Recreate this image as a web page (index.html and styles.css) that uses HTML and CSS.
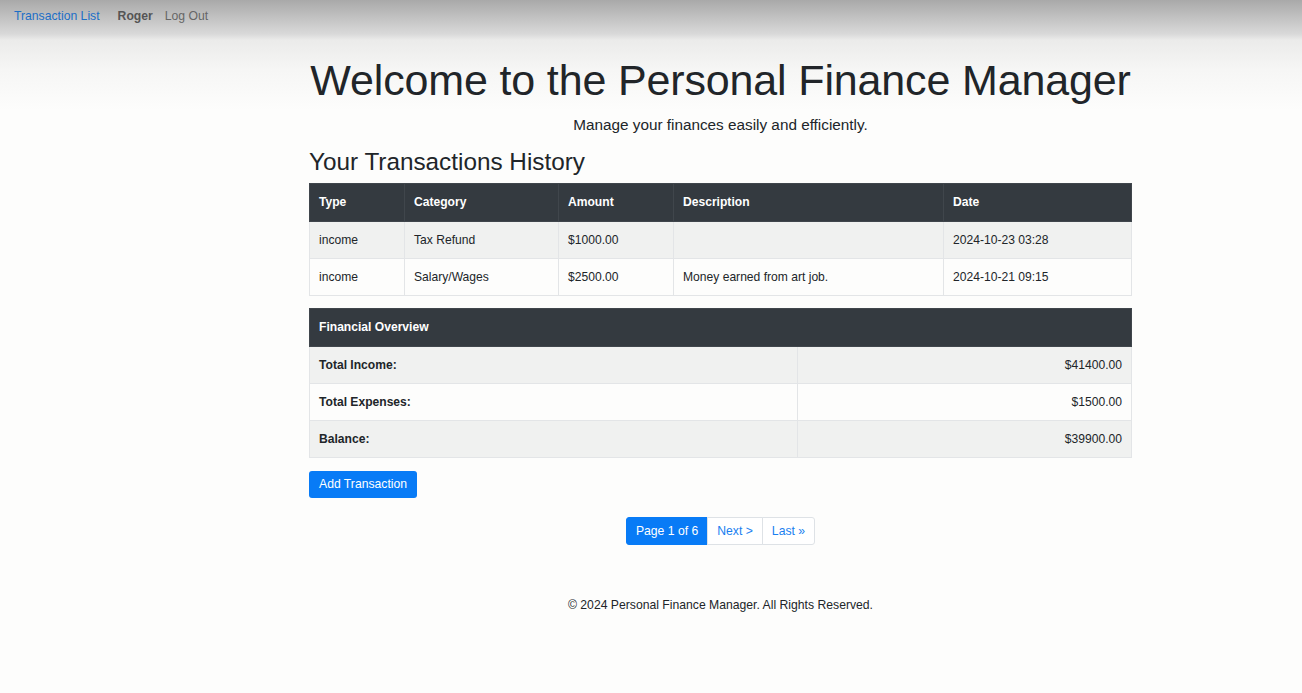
FILE: index.html
```html
<!DOCTYPE html>
<html lang="en">
<head>
<meta charset="utf-8">
<title>Personal Finance Manager</title>
<link rel="stylesheet" href="styles.css">
</head>
<body>
<nav class="topnav">
  <a class="nav-link brand" href="#">Transaction List</a>
  <span class="nav-user">Roger</span>
  <a class="nav-link logout" href="#">Log Out</a>
</nav>
<main class="main">
  <h1 class="title">Welcome to the Personal Finance Manager</h1>
  <p class="lead">Manage your finances easily and efficiently.</p>
  <h2 class="section-title">Your Transactions History</h2>
  <table class="table tx-table">
    <thead>
      <tr>
        <th class="c-type">Type</th>
        <th class="c-cat">Category</th>
        <th class="c-amt">Amount</th>
        <th class="c-desc">Description</th>
        <th class="c-date">Date</th>
      </tr>
    </thead>
    <tbody>
      <tr class="odd">
        <td>income</td>
        <td>Tax Refund</td>
        <td>$1000.00</td>
        <td></td>
        <td>2024-10-23 03:28</td>
      </tr>
      <tr>
        <td>income</td>
        <td>Salary/Wages</td>
        <td>$2500.00</td>
        <td>Money earned from art job.</td>
        <td>2024-10-21 09:15</td>
      </tr>
    </tbody>
  </table>
  <table class="table overview">
    <thead>
      <tr><th colspan="2">Financial Overview</th></tr>
    </thead>
    <tbody>
      <tr class="odd"><td class="label">Total Income:</td><td class="value">$41400.00</td></tr>
      <tr><td class="label">Total Expenses:</td><td class="value">$1500.00</td></tr>
      <tr class="odd"><td class="label">Balance:</td><td class="value">$39900.00</td></tr>
    </tbody>
  </table>
  <div class="actions">
    <a class="btn-primary" href="#">Add Transaction</a>
  </div>
  <div class="pager-wrap">
    <ul class="pager">
      <li class="page active">Page 1 of 6</li>
      <li class="page"><a href="#">Next &gt;</a></li>
      <li class="page"><a href="#">Last &raquo;</a></li>
    </ul>
  </div>
  <footer class="footer">&copy; 2024 Personal Finance Manager. All Rights Reserved.</footer>
</main>
</body>
</html>
```

FILE: styles.css
```css
* { box-sizing: border-box; }
html, body { height: 100%; }
body {
  margin: 0;
  font-family: "Liberation Sans", Arial, sans-serif;
  color: #212529;
  background: linear-gradient(to bottom, #a9a9a9 0px, #d9d9d9 34px, #ebebea 40px, #f6f6f5 70px, #fdfdfc 110px) no-repeat, #fdfdfc;
}
.topnav {
  height: 38px;
  display: flex;
  align-items: center;
  padding: 0 14px 6px;
  font-size: 12.2px;
  line-height: 16px;
}
.nav-link { text-decoration: none; }
.brand { color: #1c6ec6; margin-right: 18px; }
.nav-user { color: #555; font-weight: bold; margin-right: 12px; }
.logout { color: #666; }

.main {
  width: 823px;
  margin-left: 309px;
}
.title {
  margin: 14px 0 0;
  font-size: 43px;
  font-weight: 400;
  line-height: 56px;
  text-align: center;
  letter-spacing: -0.15px;
  white-space: nowrap;
}
.lead {
  margin: 6px 0 0;
  font-size: 15.3px;
  line-height: 22px;
  text-align: center;
}
.section-title {
  margin: 10px 0 0;
  font-size: 24.3px;
  font-weight: 400;
  line-height: 32px;
}
.table {
  width: 100%;
  border-collapse: collapse;
  font-size: 12.1px;
  line-height: 20px;
}
.table th, .table td {
  padding: 8px 9px;
  text-align: left;
  border: 1px solid #e3e5e7;
}
.table thead th {
  background: #343a40;
  color: #fff;
  font-weight: bold;
  border-color: #40464c;
  padding-bottom: 9px;
}
.table tr.odd td { background: #f0f1f0; }
.tx-table { margin-top: 5px; }
.c-type { width: 95px; }
.c-cat { width: 154px; }
.c-amt { width: 115px; }
.c-desc { width: 270px; }
.overview { margin-top: 12px; }
.overview .label { font-weight: bold; width: 488px; }
.overview .value { text-align: right; }

.actions { margin-top: 13px; }
.btn-primary {
  display: inline-block;
  background: #087bf6;
  color: #fff;
  font-size: 12.2px;
  line-height: 17px;
  padding: 5px 10px;
  border-radius: 3px;
  text-decoration: none;
}
.pager-wrap { display: flex; justify-content: center; margin-top: 19px; }
.pager {
  display: flex;
  list-style: none;
  margin: 0;
  padding: 0;
  font-size: 12.2px;
  line-height: 16px;
}
.page {
  border: 1px solid #dee2e6;
  margin-left: -1px;
  padding: 5px 9px;
  background: #fff;
}
.page a { color: #1a7ff0; text-decoration: none; }
.page:first-child { border-radius: 3px 0 0 3px; margin-left: 0; }
.page:last-child { border-radius: 0 3px 3px 0; }
.page.active { background: #087bf6; border-color: #087bf6; color: #fff; }
.footer {
  margin-top: 52px;
  text-align: center;
  font-size: 12.2px;
  line-height: 16px;
}
```
